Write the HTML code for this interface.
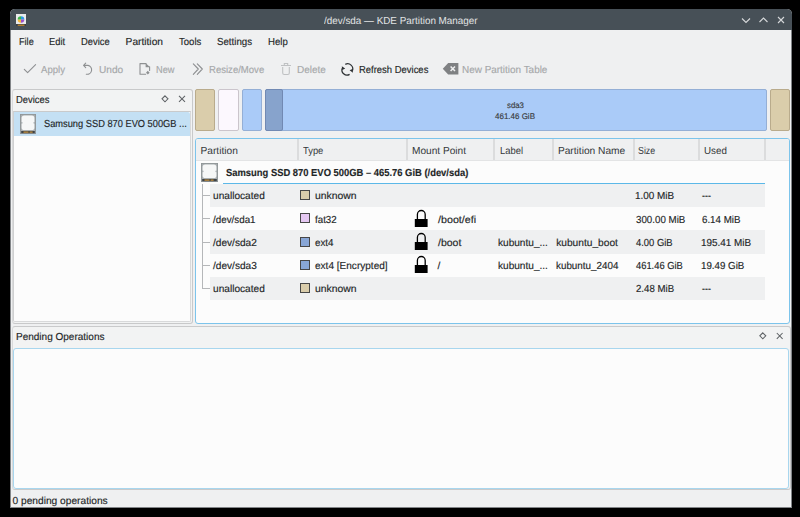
<!DOCTYPE html>
<html><head><meta charset="utf-8">
<style>
html,body{margin:0;padding:0;}
body{width:800px;height:517px;background:#000;position:relative;overflow:hidden;font-family:"Liberation Sans",sans-serif;color:#232627;}
.a{position:absolute;}
.t{position:absolute;font-size:10.2px;line-height:12px;white-space:nowrap;transform-origin:0 0;-webkit-text-stroke:0.15px currentColor;text-rendering:geometricPrecision;}
.dis{color:#a6a8aa;}
.ttl{color:#e2e4e5;-webkit-text-stroke:0 !important;}
.bar{color:#3a3d3f;}
.hdr{color:#34383b;-webkit-text-stroke:0 !important;}
.b{font-weight:bold;}
#win{left:10px;top:9px;width:782px;height:499px;background:#eff0f1;border-radius:5px 5px 0 0;overflow:hidden;}
#title{left:0;top:0;width:782px;height:21px;background:#475057;}
.sw{position:absolute;width:8px;height:8px;border:1px solid #474747;}
.row{position:absolute;left:210px;width:555px;height:23px;}
</style></head>
<body>
<div id="win" class="a">
  <div id="title" class="a"></div>
</div>
<div class="a" style="left:10px;top:30px;width:780px;height:477px;border:1px solid rgba(40,46,50,0.55);border-top:0;pointer-events:none;z-index:5"></div>

<!-- title bar content -->
<svg class="a" style="left:16px;top:14px" width="10" height="12" viewBox="0 0 10 12">
  <rect x="0" y="0" width="10" height="10" fill="#e9eaeb"/>
  <rect x="0" y="10" width="10" height="2" fill="#3a3f44"/>
  <rect x="1.7" y="10.6" width="6.8" height="1.2" fill="#c98a2c"/>
  <path d="M5 5.5 L5 2.2 A3.3 3.3 0 0 1 8.3 5.5 Z" fill="#2d9be6"/>
  <path d="M5 5.5 L8.3 5.5 A3.3 3.3 0 0 1 5 8.8 Z" fill="#9b4fc8"/>
  <path d="M5 5.5 L5 8.8 A3.3 3.3 0 0 1 1.7 5.5 Z" fill="#f6b73c"/>
  <path d="M5 5.5 L1.7 5.5 A3.3 3.3 0 0 1 5 2.2 Z" fill="#3bb54a"/>
</svg>
<svg class="a" style="left:740px;top:15px" width="48" height="10" viewBox="0 0 48 10" fill="none" stroke="#d6d8da" stroke-width="1.1">
  <path d="M2 3.5 L6 7.5 L10 3.5"/>
  <path d="M19.5 7 L23.5 3 L27.5 7"/>
  <path d="M38 2 L44 8 M44 2 L38 8"/>
</svg>

<!-- menu -->

<!-- toolbar -->





<svg class="a" style="left:0;top:55px" width="470" height="30" viewBox="0 55 470 30">
 <g fill="none" stroke="#8e9092" stroke-width="1.1" stroke-linecap="round" stroke-linejoin="round">
  <path d="M24.3 69.3 L27.6 72.7 L35.6 64.7"/>
  <path d="M85.7 63.2 L83.6 65.4 L85.7 67.6 M83.6 65.4 H88 A4.4 4.4 0 0 1 86.3 74.2"/>
  <path d="M146 63.6 H140 V74.3 H145.6 M149.6 66.8 V70.5"/>
  <path d="M193.3 63.8 L198.3 69 L193.3 74.3 M197.3 63.8 L202.3 69 L197.3 74.3"/>
 </g>
 <path d="M145.6 63.1 L150.1 67.3 H145.6 Z" fill="#8e9092"/>
 <path d="M147.8 70.8 L149.6 72.7 L147.8 74.6 L146 72.7 Z" fill="#8e9092"/>
 <g fill="none" stroke="#bfc1c3" stroke-width="1.1">
  <path d="M281 65.5 H291 M284.3 65.5 V63.5 H287.7 V65.5 M282.7 67 V73 Q282.7 74.5 284.2 74.5 H287.8 Q289.3 74.5 289.3 73 V67"/>
 </g>
 <g fill="none" stroke="#2c3033" stroke-width="1.25" transform="translate(0 0.5)">
  <path d="M345.3 63.9 A5.1 5.1 0 0 1 352.4 70.3"/>
  <path d="M349.6 73.9 A5.1 5.1 0 0 1 342.4 67.4"/>
 </g>
 <path d="M341.8 65.9 L345.2 68.3 L342.3 69.6 Z M353 72.4 L349.6 70 L352.5 68.7 Z" fill="#2c3033" transform="translate(0 0.3)"/>
 <path d="M442.8 68.8 L448.2 63.1 H458.4 V74.6 H448.2 Z" fill="#7f8183"/>
 <path d="M450.6 66.4 L455 70.9 M455 66.4 L450.6 70.9" stroke="#eff0f1" stroke-width="1.5"/>
</svg>
<!-- devices dock -->
<div class="a" style="left:12px;top:89px;width:179px;height:233px;border:1px solid #c8c9ca;border-left-color:#d9dadb;border-radius:3px;background:#f2f3f3;"></div>
<svg class="a" style="left:160px;top:94px" width="28" height="10" viewBox="0 0 28 10" fill="none" stroke="#5f6366" stroke-width="1.05">
  <path d="M5 1.8 L8 4.8 L5 7.8 L2 4.8 Z"/>
  <path d="M19 1.9 L25 7.9 M25 1.9 L19 7.9"/>
</svg>
<div class="a" style="left:13px;top:111px;width:176px;height:209px;background:#fcfcfc;border-top:1px solid #c9cacb;border-left:1px solid #cfd0d1;border-right:1px solid #d8d9da;border-bottom:1px solid #d8d9da;border-radius:0 0 2px 2px;"></div>
<div class="a" style="left:14px;top:112px;width:176px;height:24px;background:#c4e0f4;border-radius:0 2px 0 0;"></div>
<svg class="a" style="left:20px;top:114px" width="16" height="20" viewBox="0 0 16 20">
  <rect x="0" y="0" width="16" height="20" fill="#8e9497"/>
  <rect x="0.8" y="0.8" width="14.4" height="18.4" fill="#a9aeb1"/>
  <rect x="1.6" y="1.4" width="12.8" height="14.6" rx="2.6" fill="#f6f7f7"/>
  <circle cx="1.7" cy="8.8" r="0.9" fill="#a9aeb1"/><circle cx="14.3" cy="8.8" r="0.9" fill="#a9aeb1"/>
  <rect x="1.2" y="17" width="13.6" height="2.2" fill="#3e4346"/>
  <rect x="3.5" y="17.6" width="5" height="1" fill="#e8a53c"/><rect x="9.6" y="17.6" width="3" height="1" fill="#e8a53c"/>
</svg>

<!-- partition bar -->
<div class="a" style="left:195px;top:89px;width:18px;height:40px;background:#dacdab;border:1px solid #b9ab8c;border-radius:2px;"></div>
<div class="a" style="left:218px;top:89px;width:19px;height:40px;background:#fcf8fe;border:1px solid #cbc5cc;border-radius:2px;"></div>
<div class="a" style="left:242px;top:89px;width:18px;height:40px;background:#aacbf8;border:1px solid #94afd6;border-radius:2px;"></div>
<div class="a" style="left:265px;top:89px;width:500px;height:40px;background:#aacbf8;border:1px solid #94afd6;border-radius:2px;"></div>
<div class="a" style="left:265px;top:89px;width:16px;height:40px;background:#87a3cc;border:1px solid #7189b3;border-radius:2px;"></div>
<div class="a" style="left:770px;top:89px;width:18px;height:40px;background:#dacdab;border:1px solid #b9ab8c;border-radius:2px;"></div>

<!-- table -->
<div class="a" style="left:195px;top:138px;width:593px;height:184px;border:1px solid #7cc4eb;border-radius:3px;background:#fcfcfc;overflow:hidden;">
  <div class="a" style="left:0;top:0;width:593px;height:21px;background:#eff0f1;border-bottom:1px solid #e3e4e5;"></div>
</div>


<!-- header -->
<div class="a" style="left:297px;top:139px;width:2px;height:21px;background:#dbdcdd"></div>
<div class="a" style="left:406px;top:139px;width:2px;height:21px;background:#dbdcdd"></div>
<div class="a" style="left:493px;top:139px;width:2px;height:21px;background:#dbdcdd"></div>
<div class="a" style="left:552px;top:139px;width:2px;height:21px;background:#dbdcdd"></div>
<div class="a" style="left:633px;top:139px;width:2px;height:21px;background:#dbdcdd"></div>
<div class="a" style="left:698px;top:139px;width:2px;height:21px;background:#dbdcdd"></div>
<div class="a" style="left:764px;top:139px;width:2px;height:21px;background:#dbdcdd"></div>

<svg class="a" style="left:201px;top:163px" width="17" height="19" viewBox="0 0 17 19">
  <rect x="0" y="0" width="17" height="19" fill="#8e9497"/>
  <rect x="0.8" y="0.8" width="15.4" height="17.4" fill="#a9aeb1"/>
  <rect x="1.6" y="1.4" width="13.8" height="13.6" rx="2.6" fill="#f6f7f7"/>
  <circle cx="1.7" cy="8.3" r="0.9" fill="#a9aeb1"/><circle cx="15.3" cy="8.3" r="0.9" fill="#a9aeb1"/>
  <rect x="1.2" y="16" width="14.6" height="2.2" fill="#3e4346"/>
  <rect x="3.5" y="16.6" width="5" height="1" fill="#e8a53c"/><rect x="9.6" y="16.6" width="3" height="1" fill="#e8a53c"/>
</svg>
<div class="a" style="left:223px;top:183px;width:542px;height:1px;background:#5cb8e8"></div>
<div class="a" style="left:202px;top:184px;width:1px;height:105px;background:#b5b7b9"></div>
<div class="row" style="top:184px;height:23px;background:#eff0f1"></div>
<div class="a" style="left:203px;top:195px;width:7px;height:1px;background:#b5b7b9"></div>
<div class="sw" style="left:300px;top:190px;background:#dacdab"></div>
<div class="a" style="left:203px;top:218px;width:7px;height:1px;background:#b5b7b9"></div>
<div class="sw" style="left:300px;top:213px;background:#e5c8f2"></div>
<svg class="a" style="left:414px;top:209px" width="15" height="19" viewBox="0 0 15 19"><path d="M3.4 10.5 V5.4 A3.9 3.9 0 0 1 11.2 5.4 V10.5" fill="none" stroke="#000" stroke-width="1.3"/><rect x="0.8" y="10" width="12.8" height="8" fill="#000"/></svg>
<div class="row" style="top:230px;height:24px;background:#eff0f1"></div>
<div class="a" style="left:203px;top:242px;width:7px;height:1px;background:#b5b7b9"></div>
<div class="sw" style="left:300px;top:237px;background:#88a6d6"></div>
<svg class="a" style="left:414px;top:232px" width="15" height="19" viewBox="0 0 15 19"><path d="M3.4 10.5 V5.4 A3.9 3.9 0 0 1 11.2 5.4 V10.5" fill="none" stroke="#000" stroke-width="1.3"/><rect x="0.8" y="10" width="12.8" height="8" fill="#000"/></svg>
<div class="a" style="left:203px;top:265px;width:7px;height:1px;background:#b5b7b9"></div>
<div class="sw" style="left:300px;top:260px;background:#88a6d6"></div>
<svg class="a" style="left:414px;top:255px" width="15" height="19" viewBox="0 0 15 19"><path d="M3.4 10.5 V5.4 A3.9 3.9 0 0 1 11.2 5.4 V10.5" fill="none" stroke="#000" stroke-width="1.3"/><rect x="0.8" y="10" width="12.8" height="8" fill="#000"/></svg>
<div class="row" style="top:277px;height:23px;background:#eff0f1"></div>
<div class="a" style="left:203px;top:288px;width:7px;height:1px;background:#b5b7b9"></div>
<div class="sw" style="left:300px;top:283px;background:#dacdab"></div>

<!-- pending dock -->
<div class="a" style="left:12px;top:326px;width:777px;height:162px;border:1px solid #c9cacb;border-left-color:#d9dadb;border-radius:3px;background:#f2f3f3;"></div>
<svg class="a" style="left:757px;top:331px" width="28" height="10" viewBox="0 0 28 10" fill="none" stroke="#5f6366" stroke-width="1.05">
  <path d="M5.8 1.8 L8.8 4.8 L5.8 7.8 L2.8 4.8 Z"/>
  <path d="M19.8 2 L25.6 7.8 M25.6 2 L19.8 7.8"/>
</svg>
<div class="a" style="left:13px;top:348px;width:774px;height:139px;border:1px solid #a8d6ee;border-radius:3px;background:#fcfcfc;"></div>

<div class="t ttl" style="left:324.00px;top:15.50px;font-size:10.2px;transform:scaleX(0.9686);">/dev/sda — KDE Partition Manager</div>
<div class="t" style="left:18.75px;top:37.00px;font-size:10.2px;transform:scaleX(0.8969);">File</div>
<div class="t" style="left:48.50px;top:37.00px;font-size:10.2px;transform:scaleX(0.9167);">Edit</div>
<div class="t" style="left:80.90px;top:37.00px;font-size:10.2px;transform:scaleX(0.9194);">Device</div>
<div class="t" style="left:125.60px;top:37.00px;font-size:10.2px;">Partition</div>
<div class="t" style="left:178.50px;top:37.00px;font-size:10.2px;transform:scaleX(0.9375);">Tools</div>
<div class="t" style="left:216.75px;top:37.00px;font-size:10.2px;transform:scaleX(0.9527);">Settings</div>
<div class="t" style="left:267.80px;top:37.00px;font-size:10.2px;transform:scaleX(0.9429);">Help</div>
<div class="t dis" style="left:41.10px;top:64.80px;font-size:10.2px;transform:scaleX(0.9423);">Apply</div>
<div class="t dis" style="left:98.90px;top:64.80px;font-size:10.2px;transform:scaleX(0.9917);">Undo</div>
<div class="t dis" style="left:155.70px;top:64.80px;font-size:10.2px;transform:scaleX(0.9095);">New</div>
<div class="t dis" style="left:209.00px;top:64.80px;font-size:10.2px;transform:scaleX(0.9373);">Resize/Move</div>
<div class="t dis" style="left:297.20px;top:64.80px;font-size:10.2px;transform:scaleX(0.9828);">Delete</div>
<div class="t" style="left:358.90px;top:64.80px;font-size:10.2px;transform:scaleX(0.9280);">Refresh Devices</div>
<div class="t dis" style="left:461.50px;top:64.80px;font-size:10.2px;transform:scaleX(0.9750);">New Partition Table</div>
<div class="t" style="left:15.60px;top:95.00px;font-size:10.2px;transform:scaleX(0.9222);">Devices</div>
<div class="t" style="left:44.00px;top:119.00px;font-size:10.2px;transform:scaleX(0.9103);">Samsung SSD 870 EVO 500GB ...</div>
<div class="t hdr" style="left:200.50px;top:145.60px;font-size:10.2px;">Partition</div>
<div class="t hdr" style="left:302.75px;top:145.60px;font-size:10.2px;transform:scaleX(0.9205);">Type</div>
<div class="t hdr" style="left:412.00px;top:145.60px;font-size:10.2px;transform:scaleX(0.9927);">Mount Point</div>
<div class="t hdr" style="left:499.50px;top:145.60px;font-size:10.2px;transform:scaleX(0.9240);">Label</div>
<div class="t hdr" style="left:557.90px;top:145.60px;font-size:10.2px;">Partition Name</div>
<div class="t hdr" style="left:638.10px;top:145.60px;font-size:10.2px;transform:scaleX(0.8650);">Size</div>
<div class="t hdr" style="left:704.10px;top:145.60px;font-size:10.2px;transform:scaleX(0.9609);">Used</div>
<div class="t b" style="left:225.50px;top:167.50px;font-size:10.2px;font-weight:bold;transform:scaleX(0.9221);">Samsung SSD 870 EVO 500GB – 465.76 GiB (/dev/sda)</div>
<div class="t" style="left:212.60px;top:191.40px;font-size:10.2px;transform:scaleX(0.9933);">unallocated</div>
<div class="t" style="left:315.00px;top:191.40px;font-size:10.2px;transform:scaleX(1.0188);">unknown</div>
<div class="t" style="left:635.23px;top:191.40px;font-size:10.2px;transform:scaleX(0.9744);">1.00 MiB</div>
<div class="t" style="left:701.80px;top:191.40px;font-size:10.2px;transform:scaleX(0.8700);">---</div>
<div class="t" style="left:212.60px;top:214.60px;font-size:10.2px;transform:scaleX(0.9636);">/dev/sda1</div>
<div class="t" style="left:315.00px;top:214.60px;font-size:10.2px;transform:scaleX(0.9565);">fat32</div>
<div class="t" style="left:437.50px;top:214.60px;font-size:10.2px;transform:scaleX(1.0528);">/boot/efi</div>
<div class="t" style="left:636.20px;top:214.60px;font-size:10.2px;transform:scaleX(0.9569);">300.00 MiB</div>
<div class="t" style="left:701.80px;top:214.60px;font-size:10.2px;transform:scaleX(0.9550);">6.14 MiB</div>
<div class="t" style="left:212.60px;top:238.20px;font-size:10.2px;transform:scaleX(0.9920);">/dev/sda2</div>
<div class="t" style="left:315.00px;top:238.20px;font-size:10.2px;transform:scaleX(0.9605);">ext4</div>
<div class="t" style="left:437.50px;top:238.20px;font-size:10.2px;transform:scaleX(1.0326);">/boot</div>
<div class="t" style="left:497.50px;top:238.20px;font-size:10.2px;transform:scaleX(0.9900);">kubuntu_...</div>
<div class="t" style="left:556.20px;top:238.20px;font-size:10.2px;">kubuntu_boot</div>
<div class="t" style="left:636.20px;top:238.20px;font-size:10.2px;transform:scaleX(0.9231);">4.00 GiB</div>
<div class="t" style="left:700.83px;top:238.20px;font-size:10.2px;transform:scaleX(0.9740);">195.41 MiB</div>
<div class="t" style="left:212.60px;top:261.40px;font-size:10.2px;transform:scaleX(0.9920);">/dev/sda3</div>
<div class="t" style="left:315.00px;top:261.40px;font-size:10.2px;transform:scaleX(0.9863);">ext4 [Encrypted]</div>
<div class="t" style="left:437.50px;top:261.40px;font-size:10.2px;">/</div>
<div class="t" style="left:497.50px;top:261.40px;font-size:10.2px;transform:scaleX(0.9900);">kubuntu_...</div>
<div class="t" style="left:556.20px;top:261.40px;font-size:10.2px;transform:scaleX(0.9662);">kubuntu_2404</div>
<div class="t" style="left:636.20px;top:261.40px;font-size:10.2px;transform:scaleX(0.9176);">461.46 GiB</div>
<div class="t" style="left:700.84px;top:261.40px;font-size:10.2px;transform:scaleX(0.9568);">19.49 GiB</div>
<div class="t" style="left:212.60px;top:284.40px;font-size:10.2px;transform:scaleX(0.9933);">unallocated</div>
<div class="t" style="left:315.00px;top:284.40px;font-size:10.2px;transform:scaleX(1.0188);">unknown</div>
<div class="t" style="left:636.20px;top:284.40px;font-size:10.2px;transform:scaleX(0.9475);">2.48 MiB</div>
<div class="t" style="left:701.80px;top:284.40px;font-size:10.2px;transform:scaleX(0.8700);">---</div>
<div class="t" style="left:15.50px;top:332.20px;font-size:10.2px;transform:scaleX(0.9822);">Pending Operations</div>
<div class="t" style="left:12.50px;top:495.80px;font-size:10.2px;">0 pending operations</div>
<div class="t bar" style="left:506.80px;top:99.80px;font-size:8.2px;transform:scaleX(0.9556);">sda3</div>
<div class="t bar" style="left:495.20px;top:110.50px;font-size:8.2px;transform:scaleX(0.9756);">461.46 GiB</div>
</body></html>
